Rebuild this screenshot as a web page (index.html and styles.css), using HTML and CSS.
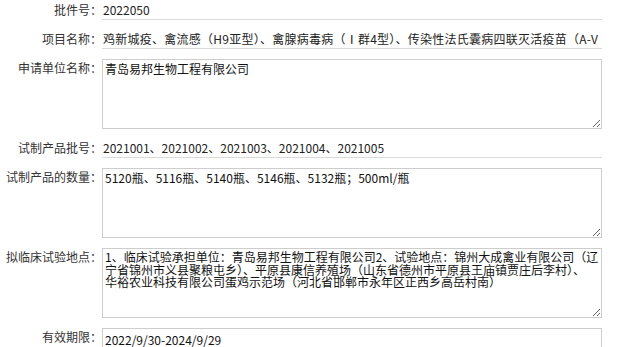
FILE: index.html
```html
<!DOCTYPE html>
<html lang="zh-CN">
<head>
    <meta charset="UTF-8">
    <meta name="viewport" content="width=device-width, initial-scale=1.0">
    <title>批件详情</title>
    <link rel="stylesheet" href="styles.css">
</head>
<body>
    <div class="detail">
        <div class="row">
            <label class="label">批件号：</label>
            <div class="value">2022050</div>
        </div>
        <div class="row">
            <label class="label">项目名称：</label>
            <div class="value wide">鸡新城疫、禽流感（H9亚型）、禽腺病毒病（Ⅰ群4型）、传染性法氏囊病四联灭活疫苗（A-V</div>
        </div>
        <div class="row">
            <label class="label">申请单位名称：</label>
            <textarea class="box" readonly>青岛易邦生物工程有限公司</textarea>
        </div>
        <div class="row">
            <label class="label">试制产品批号：</label>
            <div class="value">2021001、2021002、2021003、2021004、2021005</div>
        </div>
        <div class="row">
            <label class="label">试制产品的数量：</label>
            <textarea class="box" readonly>5120瓶、5116瓶、5140瓶、5146瓶、5132瓶；500ml/瓶</textarea>
        </div>
        <div class="row">
            <label class="label">拟临床试验地点：</label>
            <textarea class="box tight" readonly>1、临床试验承担单位：青岛易邦生物工程有限公司2、试验地点：锦州大成禽业有限公司（辽
宁省锦州市义县聚粮屯乡）、平原县康信养殖场（山东省德州市平原县王庙镇贾庄后李村）、
华裕农业科技有限公司蛋鸡示范场（河北省邯郸市永年区正西乡高岳村南）</textarea>
        </div>
        <div class="row">
            <label class="label">有效期限：</label>
            <input class="input" type="text" value="2022/9/30-2024/9/29" readonly>
        </div>
    </div>
</body>
</html>
```

FILE: styles.css
```css
:root {
    --label: #333;
    --line: #dadada;
    --frame: #cdcdcd;
}

html,
body {
    overflow: hidden;
}

body {
    margin: 0;
    padding: 1px 0 0 0;
    font-family: "Noto Sans CJK SC", "Noto Sans", sans-serif;
    font-size: 12px;
    color: #222;
    background: #fff;
}

.detail {
    display: flex;
    flex-direction: column;
    gap: 10px;
}

.row {
    display: flex;
    align-items: flex-start;
}

.label {
    width: 102px;
    flex-shrink: 0;
    text-align: right;
    line-height: 18px;
    color: var(--label);
}

.value {
    width: 500px;
    height: 19px;
    box-sizing: border-box;
    padding-left: 1px;
    line-height: 18px;
    border-bottom: 1px solid var(--line);
    white-space: nowrap;
    overflow: hidden;
}

.wide {
    letter-spacing: 0.25px;
}

.box {
    width: 500px;
    height: 70px;
    box-sizing: border-box;
    margin: 0;
    padding: 2px;
    border: 1px solid var(--frame);
    font-family: "Noto Sans CJK SC", sans-serif;
    font-size: 12px;
    line-height: 14px;
    color: #111;
    resize: both;
    outline: none;
}

.tight {
    line-height: 12.5px;
    white-space: pre-wrap;
}

.input {
    width: 500px;
    height: 26px;
    box-sizing: border-box;
    margin: 0;
    padding: 1px 2px 5px;
    border: 1px solid var(--frame);
    font-family: "Noto Sans CJK SC", sans-serif;
    font-size: 12px;
    line-height: 16px;
    color: #111;
    vertical-align: top;
}
```
